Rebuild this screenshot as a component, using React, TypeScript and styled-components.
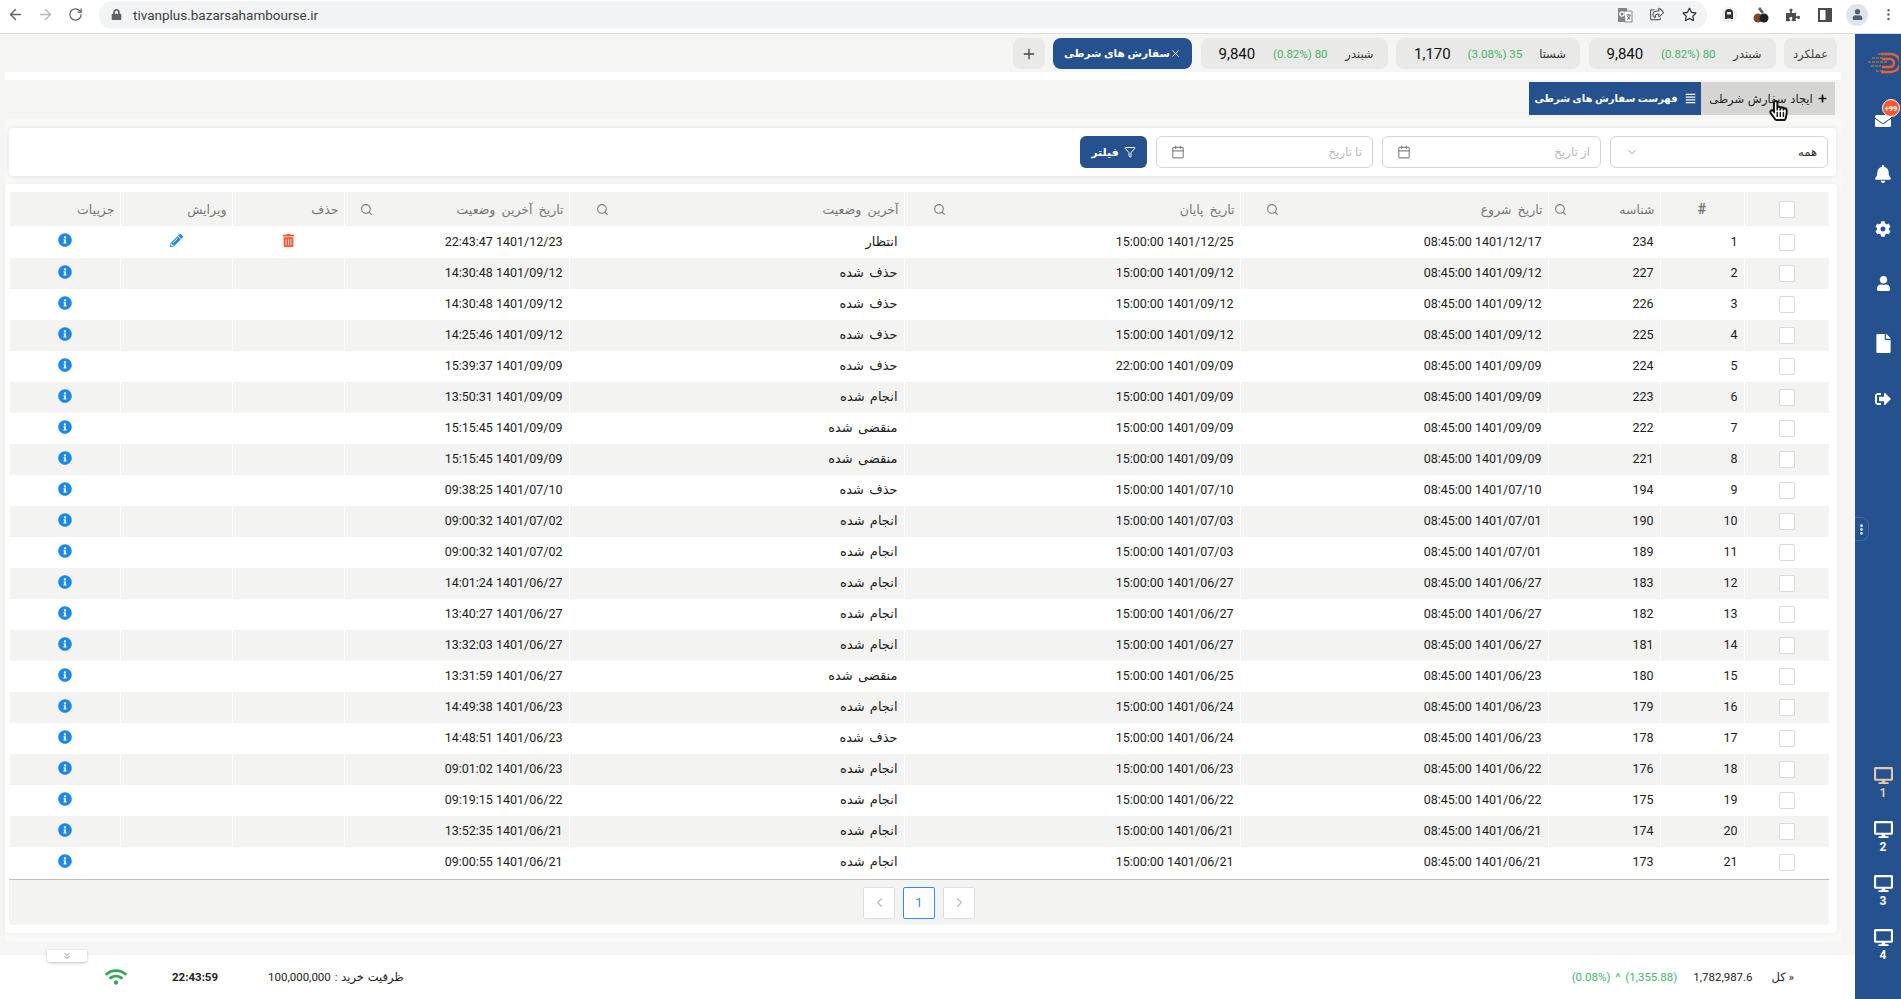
import React from 'react';
import styled, { createGlobalStyle } from 'styled-components';
import {
  FaAlignJustify,
  FaBell,
  FaCog,
  FaDesktop,
  FaEnvelope,
  FaFile,
  FaHandPointer,
  FaInfoCircle,
  FaLock,
  FaPencilAlt,
  FaPlus,
  FaPuzzlePiece,
  FaRegHandPointer,
  FaRegShareSquare,
  FaRegStar,
  FaSignOutAlt,
  FaTrashAlt,
  FaUser,
  FaWifi,
} from 'react-icons/fa';
import {
  ArrowLeft,
  ArrowRight,
  Calendar,
  ChevronDown,
  ChevronLeft,
  ChevronRight,
  ChevronsDown,
  EllipsisVertical,
  Filter,
  Plus,
  RotateCw,
  Search,
  X,
} from 'lucide-react';

const Blue = '#26518f';
const Green = '#45b56c';
const FontStack = `Roboto, "DejaVu Sans", sans-serif`;

const GlobalStyle = createGlobalStyle`
  html, body {
    margin: 0;
    height: 100%;
    overflow: hidden;
    background: #f5f5f3;
    font-family: ${FontStack};
  }
  * { box-sizing: border-box; }
`;

const Page = styled.div`
  display: flex;
  flex-direction: column;
  height: 999px;
  direction: rtl;
`;

const Chrome = styled.div`
  direction: ltr;
  display: flex;
  align-items: center;
  height: 34px;
  padding-bottom: 4px;
  background: #fff;
  border-bottom: 1px solid #dcdcdc;
  color: #5f6368;
`;

const ChromeBtn = styled.span<{ $w?: number }>`
  display: flex;
  justify-content: center;
  width: ${p => p.$w ?? 32}px;
  flex: none;
`;

const MenuBtn = styled(ChromeBtn)`
  margin-left: 2px;
`;

const UrlPill = styled.div`
  display: flex;
  align-items: center;
  gap: 11px;
  flex: 1;
  height: 28px;
  margin: 0 6px 0 9px;
  padding-left: 12px;
  padding-right: 2px;
  background: #f1f3f4;
  border-radius: 14px;
`;

const PillTools = styled.div`
  display: flex;
`;

const UrlText = styled.span`
  flex: 1;
  font-size: 13.5px;
  color: #3c4043;
`;

const Avatar = styled.span`
  display: flex;
  align-items: center;
  justify-content: center;
  width: 22px;
  height: 22px;
  margin: 0 5px;
  border-radius: 50%;
  background: #dfe5ea;
  color: #4f5f75;
`;

const Body = styled.div`
  display: flex;
  flex: 1;
  min-height: 0;
`;

const Sidebar = styled.aside`
  position: relative;
  display: flex;
  flex-direction: column;
  align-items: center;
  width: 46px;
  flex: none;
  padding: 17px 0 30px 10px;
  background: ${Blue};
  color: #fff;
`;

const NavItem = styled.div<{ $top: number }>`
  position: relative;
  display: flex;
  justify-content: center;
  align-items: center;
  height: 20px;
  margin-top: ${p => p.$top}px;
`;

const Badge = styled.span`
  position: absolute;
  top: -12px;
  right: -9px;
  display: flex;
  justify-content: center;
  align-items: center;
  width: 18px;
  height: 18px;
  border-radius: 50%;
  background: #f4592f;
  border: 1px solid #fff;
  color: #fff;
  font-size: 7.5px;
  font-weight: 700;
`;

const Handle = styled.div`
  position: absolute;
  top: 483px;
  left: 0;
  display: flex;
  align-items: center;
  width: 14px;
  height: 24px;
  border: 1px solid #3f6aa6;
  border-left: none;
  border-radius: 0 8px 8px 0;
  color: #fff;
`;

const Desks = styled.div`
  display: flex;
  flex-direction: column;
  gap: 13px;
  margin-top: auto;
`;

const Desk = styled.div<{ $active?: boolean }>`
  display: flex;
  flex-direction: column;
  align-items: center;
  gap: 1px;
  height: 41px;
  font-size: 12px;
  font-weight: 700;
  color: ${p => (p.$active ? '#e6c6a4' : '#fff')};
`;

const Main = styled.main`
  display: flex;
  flex-direction: column;
  flex: 1;
  min-width: 0;
`;

const TabBar = styled.div`
  display: flex;
  align-items: stretch;
  gap: 8.5px;
  height: 31px;
  margin: 4px 18px 3px 0;
`;

const Tab = styled.div<{ $w: number }>`
  display: flex;
  align-items: center;
  justify-content: space-between;
  width: ${p => p.$w}px;
  padding: 0 14px 0 18px;
  border-radius: 8px;
  background: #e9e9e7;
  color: #333;
  font-size: 11.5px;
  white-space: nowrap;
`;

const ActiveTab = styled(Tab)`
  padding: 0 11px;
  background: ${Blue};
  color: #fff;
  font-size: 10.5px;
  font-weight: 700;
`;

const LabelTab = styled(Tab)`
  justify-content: center;
  padding: 0;
  color: #444;
`;

const Change = styled.span`
  color: ${Green};
`;

const Price = styled.span`
  color: #111;
  font-size: 15px;
`;

const Panel = styled.div`
  display: flex;
  flex-direction: column;
  flex: 1;
  margin: 0 14px 13px 5px;
  background: #f9f9f8;
  border-top: 8px solid #fff;
`;

const SubBar = styled.div`
  display: flex;
  height: 39px;
  padding: 2px 6px 4px 0;
  background: #f5f5f3;
`;

const SubTab = styled.div<{ $active?: boolean }>`
  position: relative;
  display: flex;
  align-items: center;
  justify-content: center;
  gap: ${p => (p.$active ? 7 : 5)}px;
  width: ${p => (p.$active ? 172 : 134)}px;
  background: ${p => (p.$active ? Blue : '#d5d5d3')};
  color: ${p => (p.$active ? '#fff' : '#222')};
  font-size: ${p => (p.$active ? 10 : 11.5)}px;
  font-weight: ${p => (p.$active ? 700 : 400)};
  word-spacing: ${p => (p.$active ? 0 : 1)}px;
  white-space: nowrap;
`;

const Cursor = styled.span`
  position: absolute;
  top: 18px;
  left: 67px;
  display: grid;
  & > svg {
    grid-area: 1 / 1;
  }
`;

const CursorFill = styled(FaHandPointer)`
  color: #fff;
`;

const CursorLine = styled(FaRegHandPointer)`
  color: #111;
`;

const FilterCard = styled.div`
  display: flex;
  align-items: stretch;
  gap: 9px;
  height: 48px;
  margin: 9px 5px 8px 4px;
  padding: 8px;
  background: #fff;
  border-radius: 4px;
  box-shadow: 0 0 6px rgba(0, 0, 0, 0.1);
`;

const Field = styled.div<{ $w: number }>`
  display: flex;
  align-items: center;
  justify-content: space-between;
  width: ${p => p.$w}px;
  padding: 0 10px 0 14px;
  background: #fff;
  border: 1px solid #d4d4d4;
  border-radius: 6px;
  color: #333;
  font-size: 11.5px;
`;

const Placeholder = styled.span`
  color: #b9b9b9;
  font-size: 12px;
`;

const FilterButton = styled.button`
  display: flex;
  align-items: center;
  justify-content: center;
  gap: 5px;
  width: 67px;
  border: none;
  border-radius: 6px;
  background: ${Blue};
  color: #fff;
  font-family: inherit;
  font-size: 11px;
  font-weight: 700;
`;

const TableCard = styled.section`
  margin-right: 4px;
  padding: 8px 8px 8px 4px;
  background: #fff;
  border-radius: 4px;
  box-shadow: 0 0 6px rgba(0, 0, 0, 0.06);
`;

const Table = styled.table`
  width: 1820px;
  table-layout: fixed;
  border-collapse: collapse;
  font-size: 12.5px;
  color: #1c1c1c;
`;

const Th = styled.th<{ $w: number; $iconPad?: number }>`
  width: ${p => p.$w}px;
  height: 34px;
  padding: 0 5px 0 ${p => p.$iconPad ?? 6}px;
  background: #f3f3f2;
  border-left: 1px solid #fff;
  color: #777;
  font-size: 12.5px;
  font-weight: 400;
  word-spacing: 3px;
  text-align: right;
`;

const HeadInner = styled.div`
  display: flex;
  align-items: center;
  justify-content: space-between;
`;

const Tr = styled.tr`
  height: 31px;
  &:first-child {
    height: 32px;
  }
  &:nth-child(even) td {
    background: #f3f3f2;
  }
`;

const Td = styled.td`
  padding: 0 6px 2px;
  border-left: 1px solid #fff;
  text-align: right;
  white-space: nowrap;
`;

const StatusCell = styled(Td)`
  font-size: 13px;
  word-spacing: 2px;
`;

const Centered = styled(Td)`
  padding: 0;
  text-align: center;
`;

const IconCell = styled(Centered)`
  padding-bottom: 5px;
`;

const CenteredTh = styled(Th)`
  padding: 0;
  text-align: center;
`;

const Hash = styled.strong`
  font-size: 14px;
`;

const Check = styled.span`
  display: inline-block;
  width: 16px;
  height: 17px;
  vertical-align: middle;
  background: #fff;
  border: 1px solid #d9d9d9;
  border-radius: 2px;
`;

const InfoIcon = styled(FaInfoCircle)`
  display: inline-block;
  vertical-align: middle;
  color: #1e88e5;
`;

const EditIcon = styled(FaPencilAlt)`
  display: inline-block;
  vertical-align: middle;
  color: #1e88e5;
`;

const TrashIcon = styled(FaTrashAlt)`
  display: inline-block;
  vertical-align: middle;
  color: #f4592f;
`;

const TableFooter = styled.div`
  display: flex;
  align-items: center;
  justify-content: center;
  gap: 8px;
  height: 46px;
  margin-top: 1px;
  background: #f3f3f2;
  border-top: 1px solid #bdbdbd;
  border-radius: 0 0 4px 4px;
`;

const PageBtn = styled.span<{ $active?: boolean }>`
  display: flex;
  align-items: center;
  justify-content: center;
  width: 32px;
  height: 32px;
  background: #fff;
  border: 1px solid ${p => (p.$active ? '#2f8fe8' : '#dedede')};
  border-radius: 2px;
  color: ${p => (p.$active ? '#2f8fe8' : '#bdbdbd')};
  font-size: 13px;
`;

const StatusBar = styled.footer`
  position: relative;
  display: flex;
  align-items: center;
  justify-content: space-between;
  height: 44px;
  padding: 0 61px 0 105px;
  background: #fff;
  color: #222;
  font-size: 11.5px;
`;

const Group = styled.div<{ $gap: number }>`
  display: flex;
  align-items: center;
  gap: ${p => p.$gap}px;
`;

const Collapse = styled.span`
  position: absolute;
  top: -5px;
  left: 47px;
  display: flex;
  justify-content: center;
  align-items: center;
  width: 40px;
  height: 12px;
  background: #fff;
  border-radius: 0 0 3px 3px;
  box-shadow: 0 1px 3px rgba(0, 0, 0, 0.25);
  color: #6b7a90;
`;

const Clock = styled.span`
  margin-left: -5px;
  font-weight: 700;
`;

const Capacity = styled.span`
  word-spacing: 1px;
`;

const GreenText = styled.span`
  display: inline-flex;
  align-items: center;
  gap: 5px;
  margin-right: -3px;
  color: ${Green};
`;

const Logo = () => (
  <svg width="32" height="24" viewBox="0 0 32 24" fill="none">
    <path d="M14 3h10a9 9 0 0 1 0 18H14" stroke="#ef5f30" strokeWidth="2.4" />
    <path d="M15 8h8a4 4 0 0 1 0 8h-8" stroke="#ef5f30" strokeWidth="2.4" />
    <path d="M11 3h14M5 7h12M1 11h20M4 15h10M9 20h9" stroke="#a8703c" strokeWidth="1.6" strokeDasharray="3 1" />
  </svg>
);

// small coloured extension badges of the browser toolbar
const Ext1 = () => (
  <svg width="18" height="18" viewBox="0 0 18 18">
    <circle cx="9" cy="9" r="8" fill="#eceff1" />
    <path d="M5 13V7a4 4 0 0 1 8 0v6h-2l-1-1-1 1-1-1-1 1z" fill="#333" />
    <rect x="7" y="6" width="4" height="2.5" fill="#eceff1" />
  </svg>
);

const Ext2 = () => (
  <svg width="18" height="18" viewBox="0 0 18 18">
    <path d="M8 1l4 5-2 2-4-5z" fill="#666" />
    <circle cx="6" cy="12" r="4.5" fill="#7a4a20" />
    <circle cx="12" cy="12" r="4.5" fill="#222" />
  </svg>
);

const SidePanelIcon = () => (
  <svg width="14" height="14" viewBox="0 0 14 14">
    <path d="M1 1h12v12H1zM8.500 1v12" fill="none" stroke="#4a4d50" strokeWidth="2" />
    <rect x="8.500" y="1" width="4.500" height="12" fill="#4a4d50" />
  </svg>
);

const TranslateIcon = () => (
  <svg width="16" height="16" viewBox="0 0 16 16">
    <path d="M1 1h9l1 14H1z" fill="#80868b" />
    <path d="M7 4h8v11H8z" fill="#fff" stroke="#80868b" />
    <circle cx="5" cy="7" r="2.2" fill="none" stroke="#fff" strokeWidth="1.2" />
    <path d="M9.500 8h4M11.500 7v1M10 12.500c2-1 3-2.500 3-4.500M10.500 9c.5 1.500 1.500 2.700 2.800 3.500" fill="none" stroke="#666" />
  </svg>
);

type RowData = [number, string, string, string, string];

const Done = 'انجام شده';
const Deleted = 'حذف شده';
const Expired = 'منقضی شده';

const rows: RowData[] = [
  [234, '1401/12/17', '1401/12/25 15:00:00', 'انتظار', '1401/12/23 22:43:47'],
  [227, '1401/09/12', '1401/09/12 15:00:00', Deleted, '1401/09/12 14:30:48'],
  [226, '1401/09/12', '1401/09/12 15:00:00', Deleted, '1401/09/12 14:30:48'],
  [225, '1401/09/12', '1401/09/12 15:00:00', Deleted, '1401/09/12 14:25:46'],
  [224, '1401/09/09', '1401/09/09 22:00:00', Deleted, '1401/09/09 15:39:37'],
  [223, '1401/09/09', '1401/09/09 15:00:00', Done, '1401/09/09 13:50:31'],
  [222, '1401/09/09', '1401/09/09 15:00:00', Expired, '1401/09/09 15:15:45'],
  [221, '1401/09/09', '1401/09/09 15:00:00', Expired, '1401/09/09 15:15:45'],
  [194, '1401/07/10', '1401/07/10 15:00:00', Deleted, '1401/07/10 09:38:25'],
  [190, '1401/07/01', '1401/07/03 15:00:00', Done, '1401/07/02 09:00:32'],
  [189, '1401/07/01', '1401/07/03 15:00:00', Done, '1401/07/02 09:00:32'],
  [183, '1401/06/27', '1401/06/27 15:00:00', Done, '1401/06/27 14:01:24'],
  [182, '1401/06/27', '1401/06/27 15:00:00', Done, '1401/06/27 13:40:27'],
  [181, '1401/06/27', '1401/06/27 15:00:00', Done, '1401/06/27 13:32:03'],
  [180, '1401/06/23', '1401/06/25 15:00:00', Expired, '1401/06/27 13:31:59'],
  [179, '1401/06/23', '1401/06/24 15:00:00', Done, '1401/06/23 14:49:38'],
  [178, '1401/06/23', '1401/06/24 15:00:00', Deleted, '1401/06/23 14:48:51'],
  [176, '1401/06/22', '1401/06/23 15:00:00', Done, '1401/06/23 09:01:02'],
  [175, '1401/06/22', '1401/06/22 15:00:00', Done, '1401/06/22 09:19:15'],
  [174, '1401/06/21', '1401/06/21 15:00:00', Done, '1401/06/21 13:52:35'],
  [173, '1401/06/21', '1401/06/21 15:00:00', Done, '1401/06/21 09:00:55'],
];

const quotes = [
  { name: 'شبندر', change: '80 (0.82%)', price: '9,840', w: 187 },
  { name: 'شستا', change: '35 (3.08%)', price: '1,170', w: 184 },
  { name: 'شبندر', change: '80 (0.82%)', price: '9,840', w: 187 },
];

const navItems = [
  { top: 36, icon: <FaEnvelope size={16} /> },
  { top: 33, icon: <FaBell size={18} /> },
  { top: 35, icon: <FaCog size={16} /> },
  { top: 34, icon: <FaUser size={15} /> },
  { top: 40, icon: <FaFile size={19} /> },
  { top: 36, icon: <FaSignOutAlt size={16} /> },
];

const App = () => (
  <Page>
    <GlobalStyle />
    <Chrome>
      <ChromeBtn $w={30}><ArrowLeft size={17} /></ChromeBtn>
      <ChromeBtn $w={30}><ArrowRight size={17} color="#b5b8bb" /></ChromeBtn>
      <ChromeBtn $w={30}><RotateCw size={15} /></ChromeBtn>
      <UrlPill>
        <FaLock size={11} />
        <UrlText>tivanplus.bazarsahambourse.ir</UrlText>
        <PillTools>
          <ChromeBtn><TranslateIcon /></ChromeBtn>
          <ChromeBtn><FaRegShareSquare size={14} /></ChromeBtn>
          <ChromeBtn><FaRegStar size={15} color="#333" /></ChromeBtn>
        </PillTools>
      </UrlPill>
      <ChromeBtn><Ext1 /></ChromeBtn>
      <ChromeBtn><Ext2 /></ChromeBtn>
      <ChromeBtn><FaPuzzlePiece size={14} color="#4a4d50" /></ChromeBtn>
      <ChromeBtn><SidePanelIcon /></ChromeBtn>
      <Avatar><FaUser size={11} /></Avatar>
      <MenuBtn $w={26}><EllipsisVertical size={15} /></MenuBtn>
    </Chrome>
    <Body>
      <Sidebar>
        <Logo />
        {navItems.map((item, i) => (
          <NavItem $top={item.top} key={i}>
            {item.icon}
            {i === 0 && <Badge>99+</Badge>}
          </NavItem>
        ))}
        <Handle><EllipsisVertical size={13} strokeWidth={3} /></Handle>
        <Desks>
          {[1, 2, 3, 4].map(n => (
            <Desk $active={n === 1} key={n}>
              <FaDesktop size={19} />
              {n}
            </Desk>
          ))}
        </Desks>
      </Sidebar>
      <Main>
        <TabBar>
          <LabelTab $w={53}>عملکرد</LabelTab>
          {quotes.map((q, i) => (
            <Tab $w={q.w} key={i}>
              <span>{q.name}</span>
              <Change>{q.change}</Change>
              <Price>{q.price}</Price>
            </Tab>
          ))}
          <ActiveTab $w={139}>
            <X size={13} />
            <span>سفارش های شرطی</span>
          </ActiveTab>
          <LabelTab $w={32}><Plus size={16} /></LabelTab>
        </TabBar>
        <Panel>
          <SubBar>
            <SubTab>
              <FaPlus size={9} color="#111" />
              ایجاد سفارش شرطی
              <Cursor>
                <CursorFill size={21} />
                <CursorLine size={21} />
              </Cursor>
            </SubTab>
            <SubTab $active>
              <FaAlignJustify size={11} />
              فهرست سفارش های شرطی
            </SubTab>
          </SubBar>
          <FilterCard>
            <Field $w={218}>
              همه
              <ChevronDown size={14} color="#c8c8c8" />
            </Field>
            <Field $w={219}>
              <Placeholder>از تاریخ</Placeholder>
              <Calendar size={14} color="#888" />
            </Field>
            <Field $w={217}>
              <Placeholder>تا تاریخ</Placeholder>
              <Calendar size={14} color="#888" />
            </Field>
            <FilterButton>
              <Filter size={12} />
              فیلتر
            </FilterButton>
          </FilterCard>
          <TableCard>
            <Table>
              <thead>
                <tr>
                  <CenteredTh $w={85}><Check /></CenteredTh>
                  <CenteredTh $w={84}><Hash>#</Hash></CenteredTh>
                  <Th $w={112} $iconPad={5}><HeadInner>شناسه<Search size={13} /></HeadInner></Th>
                  <Th $w={308} $iconPad={25}><HeadInner>تاریخ شروع<Search size={13} /></HeadInner></Th>
                  <Th $w={336} $iconPad={28}><HeadInner>تاریخ پایان<Search size={13} /></HeadInner></Th>
                  <Th $w={335} $iconPad={26}><HeadInner>آخرین وضعیت<Search size={13} /></HeadInner></Th>
                  <Th $w={225} $iconPad={15}><HeadInner>تاریخ آخرین وضعیت<Search size={13} /></HeadInner></Th>
                  <Th $w={112}>حذف</Th>
                  <Th $w={112}>ویرایش</Th>
                  <Th $w={111}>جزییات</Th>
                </tr>
              </thead>
              <tbody>
                {rows.map((r, i) => (
                  <Tr key={r[0]}>
                    <Centered><Check /></Centered>
                    <Td>{i + 1}</Td>
                    <Td>{r[0]}</Td>
                    <Td>{r[1]} 08:45:00</Td>
                    <Td>{r[2]}</Td>
                    <StatusCell>{r[3]}</StatusCell>
                    <Td>{r[4]}</Td>
                    <IconCell>{i === 0 && <TrashIcon size={13} />}</IconCell>
                    <IconCell>{i === 0 && <EditIcon size={13} />}</IconCell>
                    <IconCell><InfoIcon size={14} /></IconCell>
                  </Tr>
                ))}
              </tbody>
            </Table>
            <TableFooter>
              <PageBtn><ChevronRight size={15} /></PageBtn>
              <PageBtn $active>1</PageBtn>
              <PageBtn><ChevronLeft size={15} /></PageBtn>
            </TableFooter>
          </TableCard>
        </Panel>
        <StatusBar>
          <Collapse><ChevronsDown size={10} /></Collapse>
          <Group $gap={19}>
            <span>« کل</span>
            <span>1,782,987.6</span>
            <GreenText>
              <span>(1,355.88)</span>
              <span>^</span>
              <span>(0.08%)</span>
            </GreenText>
          </Group>
          <Group $gap={50}>
            <Capacity>ظرفیت خرید : 100,000,000</Capacity>
            <Clock>22:43:59</Clock>
            <FaWifi size={22} color="#34a853" />
          </Group>
        </StatusBar>
      </Main>
    </Body>
  </Page>
);

export default App;
